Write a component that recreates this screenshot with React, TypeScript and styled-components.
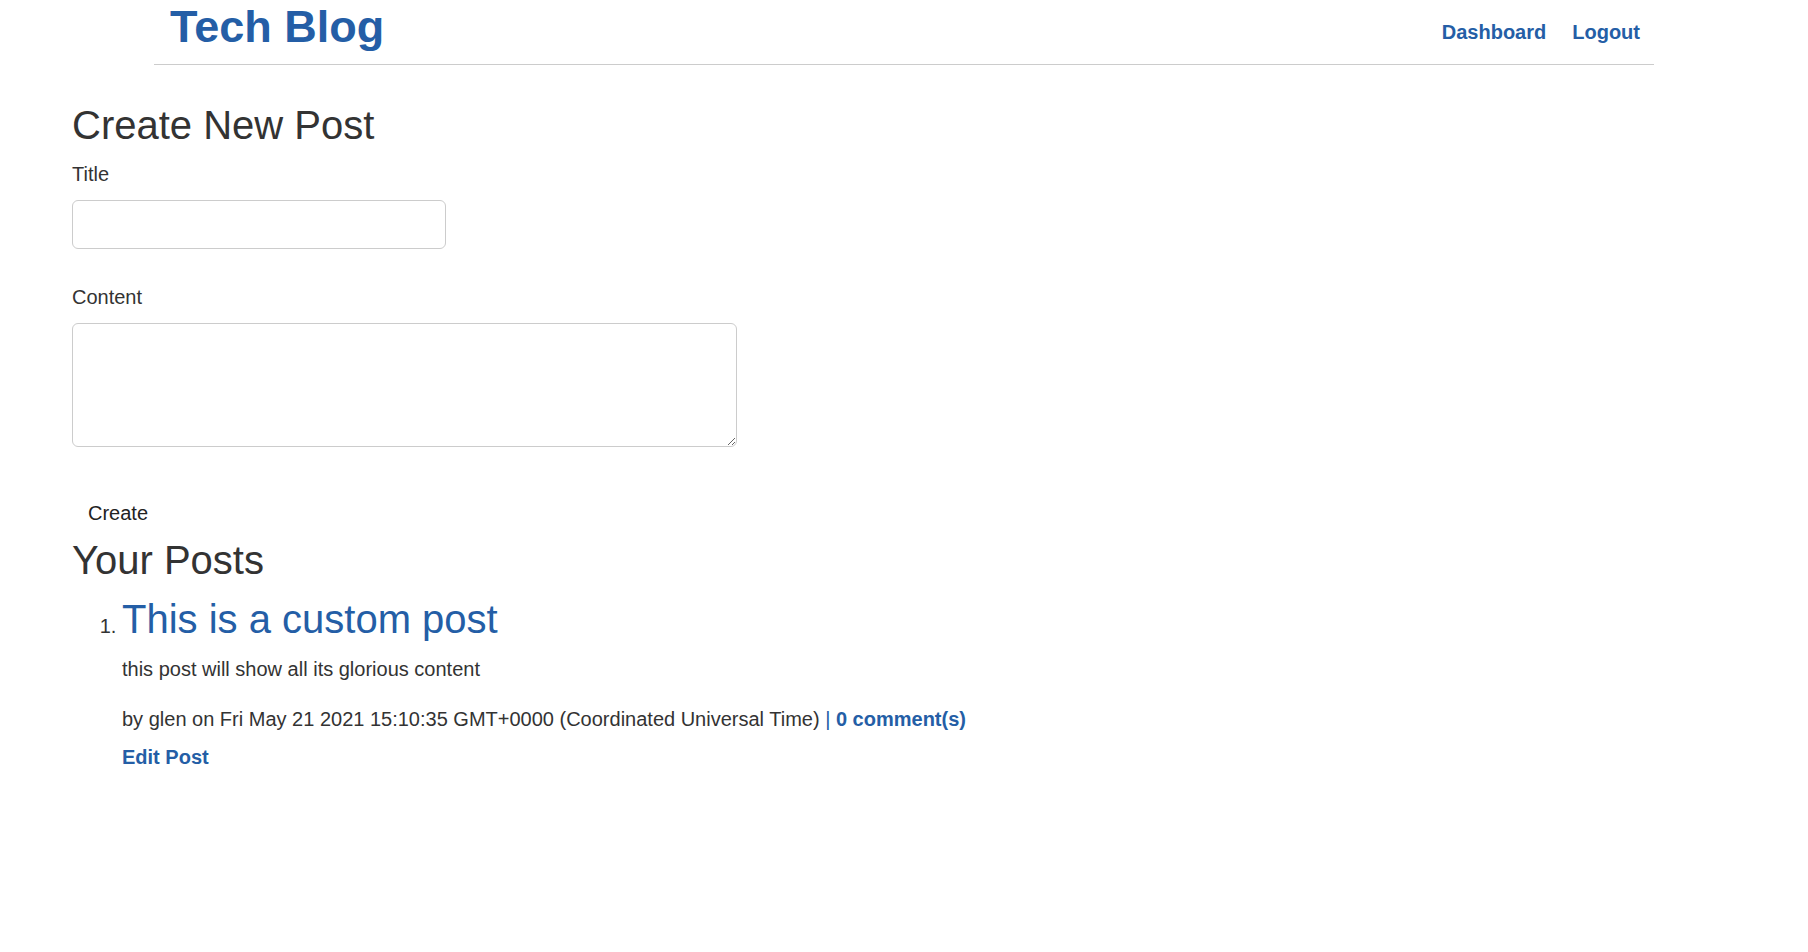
import * as React from 'react'
import styled, { createGlobalStyle } from 'styled-components'

const BLUE = '#245ea6'

const GlobalStyle = createGlobalStyle`
    html, body {
        margin: 0;
        padding: 0;
        background: #fff;
    }
    body {
        font-family: "Liberation Sans", Arial, sans-serif;
        font-size: 20px;
        color: #333;
    }
`

const Header = styled.header`
    width: 1500px;
    height: 65px;
    margin: 0 auto;
    box-sizing: border-box;
    padding: 1px 14px 0 16px;
    border-bottom: 1px solid #ccc;
    display: flex;
    justify-content: space-between;
    align-items: flex-start;
`

const Logo = styled.a`
    font-size: 45px;
    font-weight: bold;
    color: ${BLUE};
    text-decoration: none;
`

const Nav = styled.nav`
    display: flex;
    gap: 26px;
    padding-top: 20px;
`

const NavLink = styled.a`
    font-size: 20px;
    font-weight: bold;
    color: ${BLUE};
    text-decoration: none;
`

const Main = styled.main`
    padding: 38px 72px 80px;
`

const Heading = styled.h2`
    margin: 0 0 ${p => p.$gap}px;
    font-size: 40px;
    font-weight: normal;
    line-height: normal;
`

const Field = styled.div`
    margin-bottom: ${p => p.$gap}px;
`

const Label = styled.label`
    display: block;
    margin-bottom: 14px;
`

const TextInput = styled.input`
    display: block;
    width: 374px;
    height: 49px;
    box-sizing: border-box;
    border: 1px solid #ccc;
    border-radius: 6px;
    font: inherit;
    padding: 6px 12px;
`

const TextArea = styled.textarea`
    display: block;
    width: 665px;
    height: 124px;
    box-sizing: border-box;
    border: 1px solid #ccc;
    border-radius: 6px;
    font: inherit;
    padding: 6px 12px;
`

const Button = styled.button`
    display: block;
    background: none;
    border: none;
    font-family: inherit;
    font-size: 20px;
    line-height: normal;
    color: #222;
    padding: 8px 16px;
    margin: 47px 0 5px;
    cursor: pointer;
`

const PostList = styled.ol`
    margin: 0;
    padding-left: 50px;
`

const PostItem = styled.li`
    font-size: 20px;
`

const PostTitle = styled.h3`
    margin: 0;
    font-size: 40px;
    font-weight: normal;
    line-height: normal;

    a {
        color: ${BLUE};
        text-decoration: none;
    }
`

const PostText = styled.p`
    margin: ${p => p.$gap}px 0 0;
`

const InlineLink = styled.a`
    color: ${BLUE};
    font-weight: bold;
    text-decoration: none;
`

const Divider = styled.span`
    color: ${BLUE};
`

const EditLink = styled.a`
    display: block;
    margin-top: 15px;
    color: ${BLUE};
    font-weight: bold;
    text-decoration: none;
`

const POSTS = [
    {
        id: 1,
        title: 'This is a custom post',
        content: 'this post will show all its glorious content',
        author: 'glen',
        date: 'Fri May 21 2021 15:10:35 GMT+0000 (Coordinated Universal Time)',
        comments: 0,
    },
]

const App = () => {
    const [title, setTitle] = React.useState('')
    const [content, setContent] = React.useState('')

    return (
        <>
            <GlobalStyle />
            <Header>
                <Logo href="#">Tech Blog</Logo>
                <Nav>
                    <NavLink href="#">Dashboard</NavLink>
                    <NavLink href="#">Logout</NavLink>
                </Nav>
            </Header>
            <Main>
                <Heading $gap={15}>Create New Post</Heading>
                <form onSubmit={e => e.preventDefault()}>
                    <Field $gap={37}>
                        <Label htmlFor="title">Title</Label>
                        <TextInput id="title" value={title} onChange={e => setTitle(e.target.value)} />
                    </Field>
                    <Field $gap={0}>
                        <Label htmlFor="content">Content</Label>
                        <TextArea id="content" value={content} onChange={e => setContent(e.target.value)} />
                    </Field>
                    <Button type="submit">Create</Button>
                </form>
                <Heading $gap={14}>Your Posts</Heading>
                <PostList>
                    {POSTS.map(post => (
                        <PostItem key={post.id}>
                            <PostTitle><a href="#">{post.title}</a></PostTitle>
                            <PostText $gap={16}>{post.content}</PostText>
                            <PostText $gap={27}>
                                by {post.author} on {post.date} <Divider>|</Divider>{' '}
                                <InlineLink href="#">{post.comments} comment(s)</InlineLink>
                            </PostText>
                            <EditLink href="#">Edit Post</EditLink>
                        </PostItem>
                    ))}
                </PostList>
            </Main>
        </>
    )
}

export default App
